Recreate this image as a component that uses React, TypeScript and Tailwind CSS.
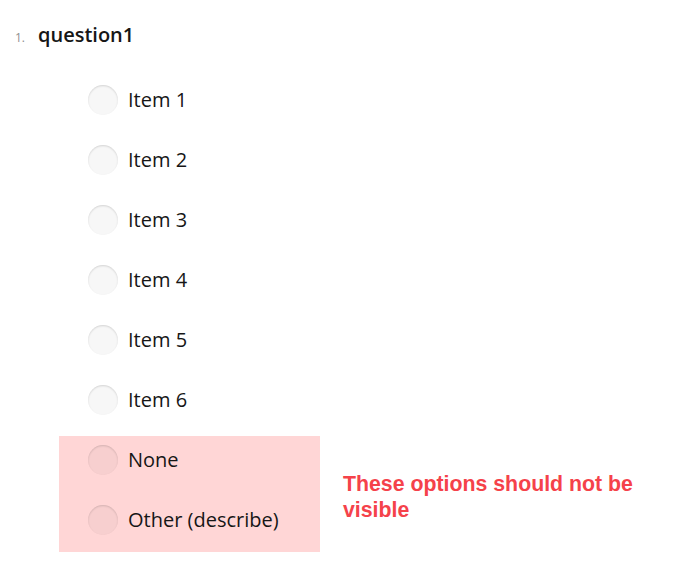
const items = ['Item 1', 'Item 2', 'Item 3', 'Item 4', 'Item 5', 'Item 6']

function Radio({ label }: { label: string }) {
  return (
    <div className="flex h-[60px] items-center gap-[10px]">
      <span className="h-[30px] w-[30px] shrink-0 rounded-full bg-black/[0.03] shadow-[inset_0_1px_2px_rgba(0,0,0,0.15)]"></span>
      <span className="text-[20px] text-[#161616]">{label}</span>
    </div>
  )
}

export default function App() {
  return (
    <main className="min-h-screen bg-white pt-[20px] font-['Open_Sans',sans-serif]">
      <div className="flex items-baseline pl-[15px]">
        <span className="w-[23px] text-[12px] text-[#909090]">1.</span>
        <h1 className="text-[20px] font-semibold text-[#161616]">question1</h1>
      </div>
      <div className="mt-[20px] pl-[88px]">
        {items.map((i) => (
          <Radio key={i} label={i} />
        ))}
      </div>
      <div className="flex items-center">
        <div className="ml-[59px] mt-[6px] w-[261px] bg-[#ffd6d6] pb-[2px] pl-[29px]">
          <div className="-mt-[6px]">
            <Radio label="None" />
            <Radio label="Other (describe)" />
          </div>
        </div>
        <p className="ml-[23px] mt-[12px] w-[320px] font-['Liberation_Sans',sans-serif] text-[21.3px] font-bold leading-[26px] text-[#f5424a]">
          These options should not be visible
        </p>
      </div>
    </main>
  )
}
